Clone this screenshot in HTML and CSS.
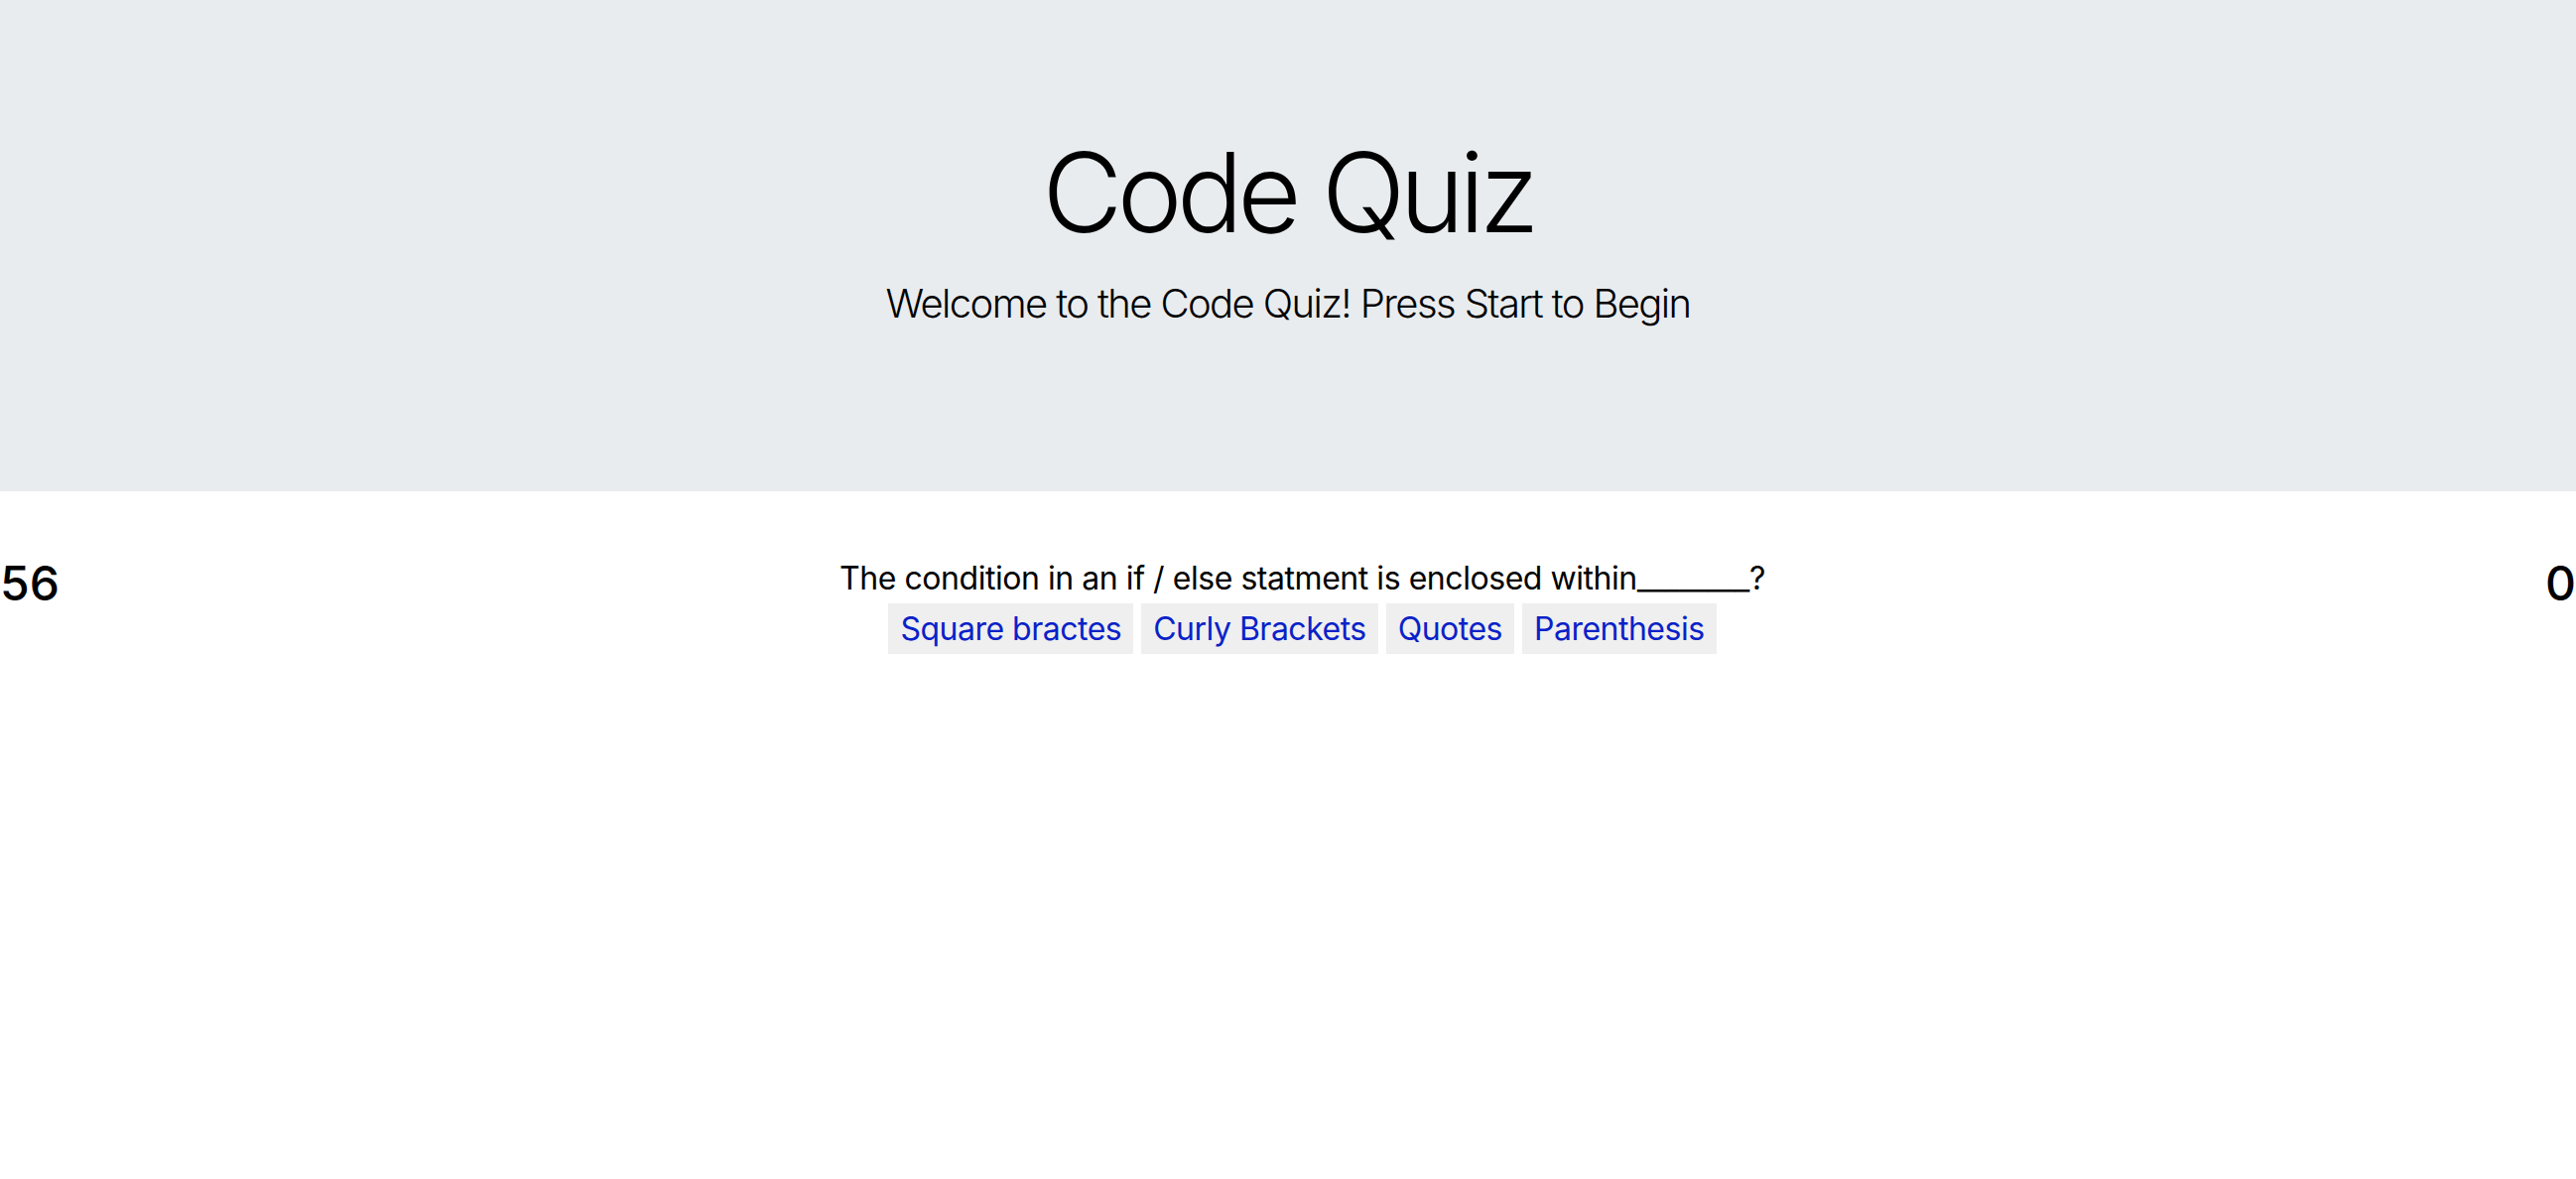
FILE: index.html
```html
<!DOCTYPE html>
<html lang="en">
<head>
<meta charset="utf-8">
<title>Code Quiz</title>
<link rel="stylesheet" href="styles.css">
</head>
<body>
<header class="jumbotron">
  <h1 class="display">Code Quiz</h1>
  <p class="lead">Welcome to the Code Quiz! Press Start to Begin</p>
</header>
<main class="quiz-row">
  <div class="timer">56</div>
  <section class="quiz">
    <div class="question">The condition in an if / else statment is enclosed within________?</div>
    <div class="answers">
      <button class="answer">Square bractes</button>
      <button class="answer">Curly Brackets</button>
      <button class="answer">Quotes</button>
      <button class="answer">Parenthesis</button>
    </div>
  </section>
  <div class="score">0</div>
</main>
</body>
</html>
```
FILE: styles.css
```css
html, body {
  margin: 0;
  padding: 0;
  background: #ffffff;
}

body {
  font-family: "Inter", "Noto Sans", "Liberation Sans", sans-serif;
  color: #000000;
}

.jumbotron {
  background: #e9ecef;
  padding: 127px 64px 127px;
  margin: 0 0 64px;
  text-align: center;
}

.display {
  font-size: 111px;
  font-weight: 300;
  line-height: 1.2;
  letter-spacing: -5.5px;
  margin: 0 0 16px;
}

.lead {
  font-size: 40px;
  font-weight: 300;
  line-height: 1.5;
  letter-spacing: -1.6px;
  margin: 0 0 32px;
}

.quiz-row {
  display: flex;
  align-items: flex-start;
}

.timer,
.score {
  font-size: 48px;
  font-weight: 500;
  line-height: 1.2;
  flex: none;
}

.quiz {
  flex: 1;
  text-align: center;
}

.question {
  font-size: 32px;
  line-height: 48px;
  letter-spacing: -0.45px;
  margin-bottom: 1px;
}

.answers {
  display: flex;
  justify-content: center;
  gap: 8px;
}

.answer {
  font-family: inherit;
  font-size: 32px;
  height: 51px;
  line-height: 51px;
  padding: 0 12px;
  letter-spacing: -0.5px;
  border: none;
  border-radius: 0;
  background: #efefef;
  color: #0a22c8;
}
```
